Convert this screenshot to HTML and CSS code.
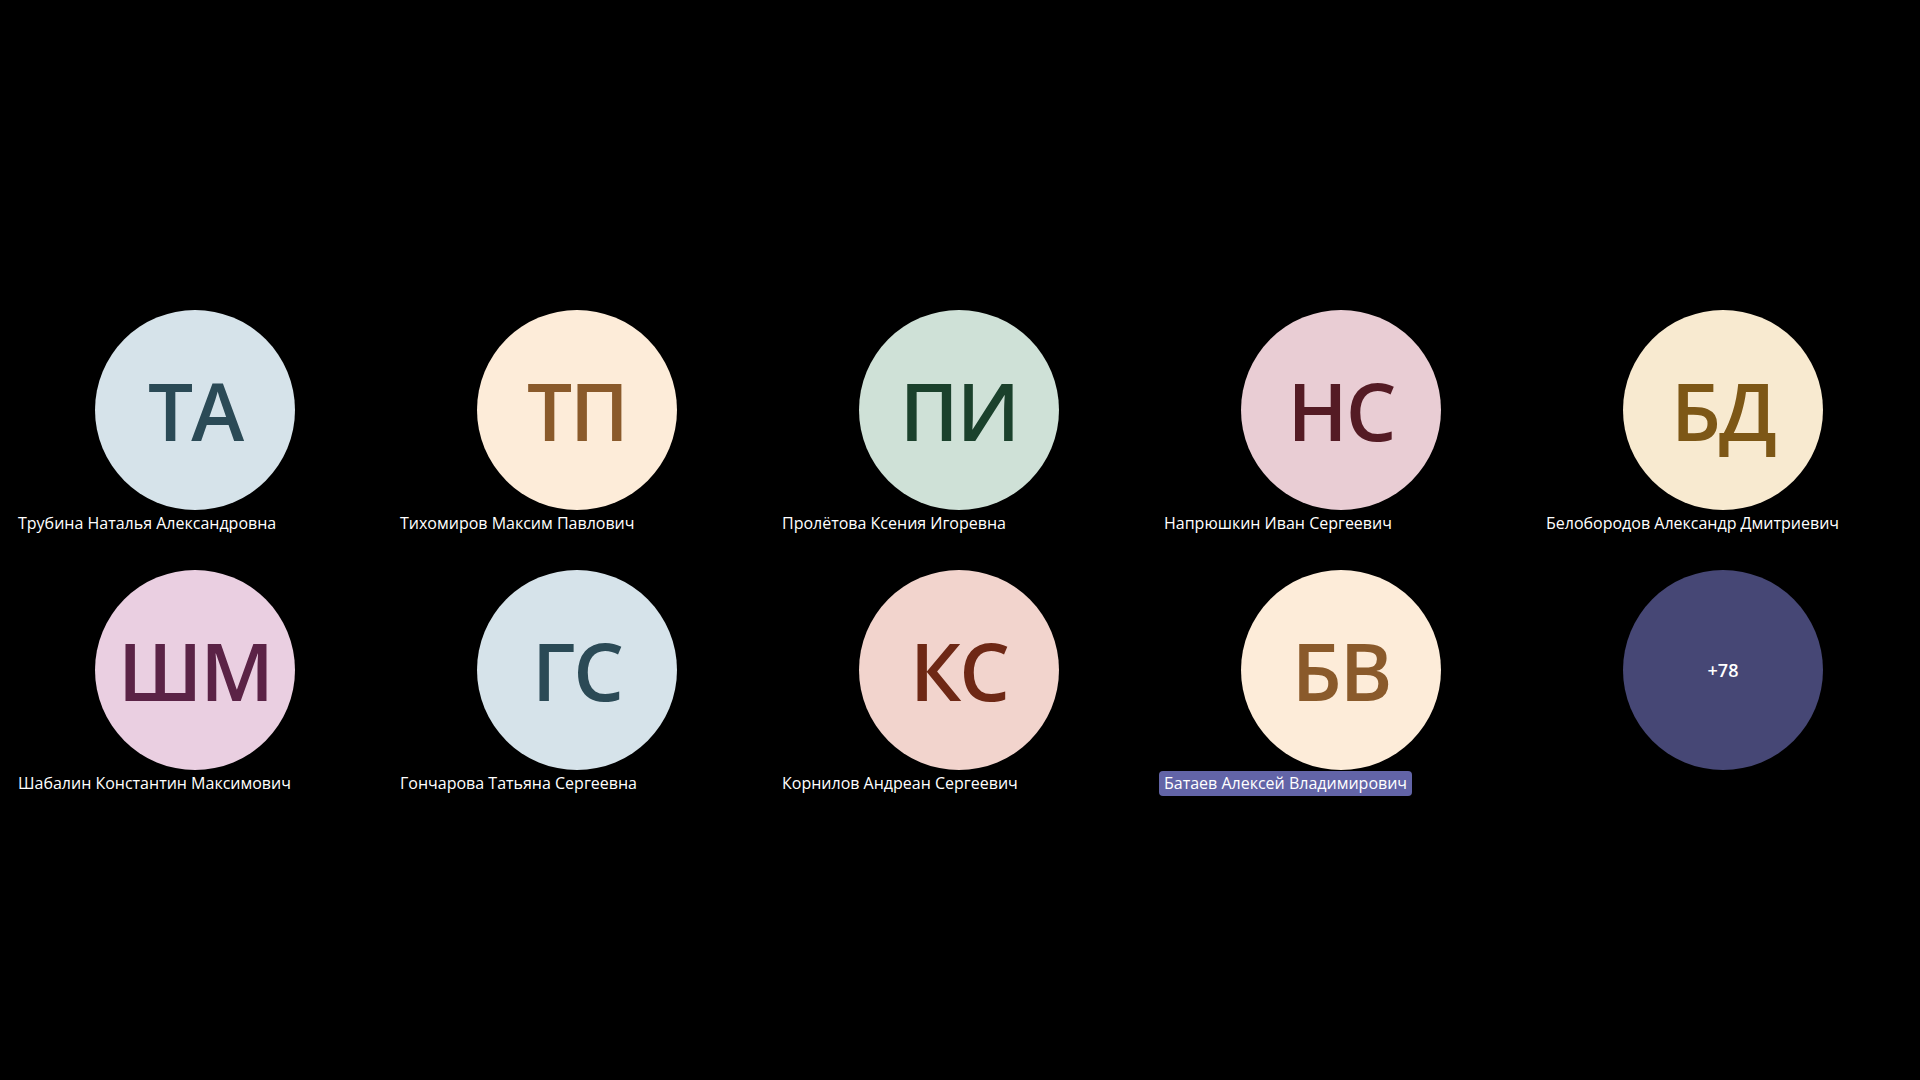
FILE: index.html
```html
<!DOCTYPE html>
<html lang="ru">
<head>
<meta charset="utf-8">
<title>Участники</title>
<link rel="stylesheet" href="styles.css">
</head>
<body>
<main class="stage">
  <div class="grid">
    <div class="tile"><div class="avatar c-steel">ТА</div><div class="name">Трубина Наталья Александровна</div></div>
    <div class="tile"><div class="avatar c-peach">ТП</div><div class="name">Тихомиров Максим Павлович</div></div>
    <div class="tile"><div class="avatar c-green">ПИ</div><div class="name">Пролётова Ксения Игоревна</div></div>
    <div class="tile"><div class="avatar c-rose">НС</div><div class="name">Напрюшкин Иван Сергеевич</div></div>
    <div class="tile"><div class="avatar c-gold">БД</div><div class="name">Белобородов Александр Дмитриевич</div></div>
    <div class="tile"><div class="avatar c-plum">ШМ</div><div class="name">Шабалин Константин Максимович</div></div>
    <div class="tile"><div class="avatar c-steel">ГС</div><div class="name">Гончарова Татьяна Сергеевна</div></div>
    <div class="tile"><div class="avatar c-coral">КС</div><div class="name">Корнилов Андреан Сергеевич</div></div>
    <div class="tile"><div class="avatar c-peach">БВ</div><div class="name name-active">Батаев Алексей Владимирович</div></div>
    <div class="tile"><div class="avatar more">+78</div></div>
  </div>
</main>
</body>
</html>
```

FILE: styles.css
```css
* { box-sizing: border-box; }
html, body {
  margin: 0;
  padding: 0;
  background: #000;
  width: 100%;
  height: 100%;
}
body {
  font-family: "Open Sans", "Noto Sans", "DejaVu Sans", sans-serif;
  color: #fff;
}
.stage {
  width: 1920px;
  height: 1080px;
  display: flex;
  align-items: center;
  padding-left: 4px;
}
.grid {
  display: grid;
  grid-template-columns: repeat(5, 382px);
  grid-auto-rows: 260px;
}
.tile {
  display: flex;
  flex-direction: column;
  align-items: center;
  padding-top: 30px;
}
.avatar {
  width: 200px;
  height: 200px;
  border-radius: 50%;
  display: flex;
  align-items: center;
  justify-content: center;
  font-size: 80px;
  font-weight: 600;
  line-height: 1;
  letter-spacing: -2px;
}
.c-steel { background: #d6e3ea; color: #2b4a56; }
.c-peach { background: #fdecd9; color: #8a5a2b; }
.c-green { background: #cfe1d7; color: #1b412c; }
.c-rose  { background: #e9cdd4; color: #541b24; }
.c-gold  { background: #f8ead0; color: #7d5716; }
.c-plum  { background: #eacfe1; color: #5b2346; }
.c-coral { background: #f2d4cd; color: #6e2815; }
.more {
  background: #464775;
  color: #fff;
  font-size: 18px;
  font-weight: 600;
  letter-spacing: 0;
}
.name {
  align-self: flex-start;
  margin-left: 9px;
  margin-top: 1px;
  height: 25px;
  padding: 0 5px;
  font-size: 16px;
  line-height: 25px;
  white-space: nowrap;
  border-radius: 4px;
}
.name-active {
  background: #6264a7;
}
```
